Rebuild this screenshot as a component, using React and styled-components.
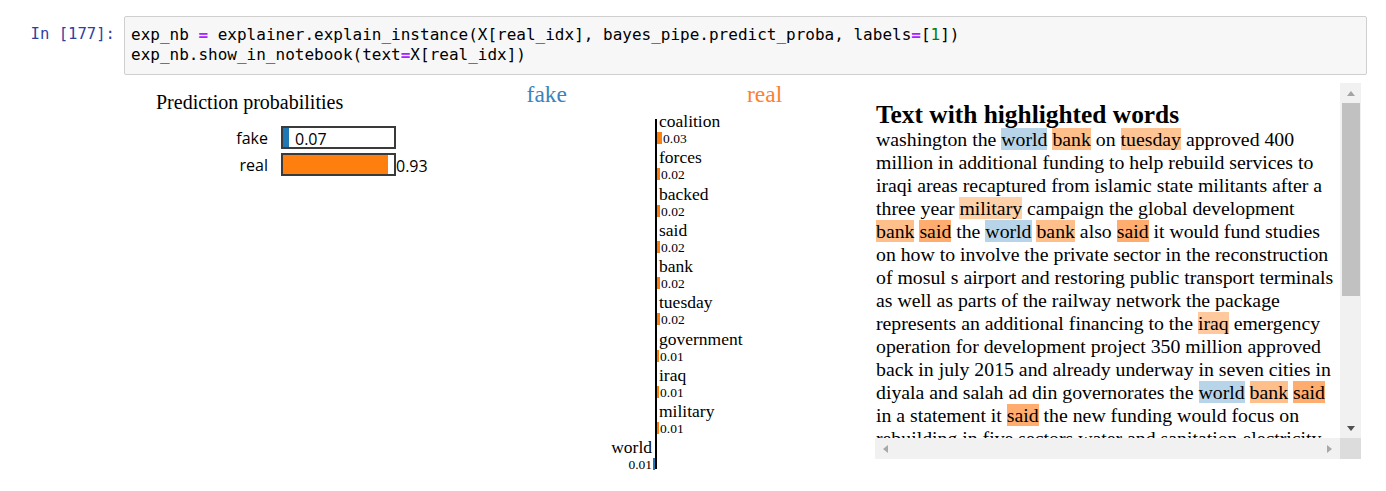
import React from "react";
import styled, { createGlobalStyle } from "styled-components";

const ORANGE = "#ff7f0e";
const BLUE = "#1f77b4";

const probs = [
  { label: "fake", value: 0.07, color: BLUE, inside: true },
  { label: "real", value: 0.93, color: ORANGE, inside: false },
];

const features = [
  { name: "coalition", value: 0.03 },
  { name: "forces", value: 0.02 },
  { name: "backed", value: 0.02 },
  { name: "said", value: 0.02 },
  { name: "bank", value: 0.02 },
  { name: "tuesday", value: 0.02 },
  { name: "government", value: 0.01 },
  { name: "iraq", value: 0.01 },
  { name: "military", value: 0.01 },
  { name: "world", value: -0.01 },
];

// highlight tones, keyed by word
const tones = {
  world: "#b8d4e8",
  bank: "#ffbf8b",
  tuesday: "#ffc493",
  military: "#ffd1a8",
  said: "#ffad6e",
  iraq: "#ffc89d",
};

const lines = [
  "washington the *world *bank on *tuesday approved 400",
  "million in additional funding to help rebuild services to",
  "iraqi areas recaptured from islamic state militants after a",
  "three year *military campaign the global development",
  "*bank *said the *world *bank also *said it would fund studies",
  "on how to involve the private sector in the reconstruction",
  "of mosul s airport and restoring public transport terminals",
  "as well as parts of the railway network the package",
  "represents an additional financing to the *iraq emergency",
  "operation for development project 350 million approved",
  "back in july 2015 and already underway in seven cities in",
  "diyala and salah ad din governorates the *world *bank *said",
  "in a statement it *said the new funding would focus on",
  "rebuilding in five sectors water and sanitation electricity",
];

export default function App() {
  return (
    <Page>
      <GlobalStyle />
      <CodeRow>
        <Prompt>In [177]:</Prompt>
        <CodeBox>
          <div>
            exp_nb <Op>=</Op> explainer.explain_instance(X[real_idx], bayes_pipe.predict_proba, labels<Op>=</Op>[<Num>1</Num>])
          </div>
          <div>
            exp_nb.show_in_notebook(text<Op>=</Op>X[real_idx])
          </div>
        </CodeBox>
      </CodeRow>

      <OutputRow>
        <ProbPanel>
          <ProbTitle>Prediction probabilities</ProbTitle>
          <ProbList>
            {probs.map((p) => (
              <ProbRow key={p.label}>
                <ProbLabel>{p.label}</ProbLabel>
                <ProbBar>
                  <ProbFill $color={p.color} style={{ width: Math.round(p.value * 115) - 2 }} />
                  {p.inside && <ProbValue $inside>{p.value.toFixed(2)}</ProbValue>}
                </ProbBar>
                {!p.inside && <ProbValue>{p.value.toFixed(2)}</ProbValue>}
              </ProbRow>
            ))}
          </ProbList>
        </ProbPanel>

        <FeaturePanel>
          <ClassHeader>
            <ClassName $color="#3b83c0" $side="left">fake</ClassName>
            <span />
            <ClassName $color="#fd8034" $side="right">real</ClassName>
          </ClassHeader>
          <Chart>
            <Axis />
            {features.map((f, i) => {
              const neg = f.value < 0;
              const cell = (
                <FeatureCell $neg={neg}>
                  <FeatureName $neg={neg}>{f.name}</FeatureName>
                  <FeatureValueRow $neg={neg}>
                    {neg && <FeatureValue>{Math.abs(f.value).toFixed(2)}</FeatureValue>}
                    <FeatureBar
                      $color={neg ? BLUE : ORANGE}
                      style={{ width: Math.max(2, Math.round(Math.abs(f.value) * 170)) }}
                    />
                    {!neg && <FeatureValue>{f.value.toFixed(2)}</FeatureValue>}
                  </FeatureValueRow>
                </FeatureCell>
              );
              return (
                <React.Fragment key={f.name}>
                  <LeftCell style={{ gridRow: i + 1 }}>{neg ? cell : null}</LeftCell>
                  <RightCell style={{ gridRow: i + 1 }}>{neg ? null : cell}</RightCell>
                </React.Fragment>
              );
            })}
          </Chart>
        </FeaturePanel>

        <TextPanel>
          <TextScroll>
            <TextHeading>Text with highlighted words</TextHeading>
            {lines.map((line, i) => (
              <TextLine key={i}>
                {line.split(" ").map((w, j) => {
                  const sep = j > 0 ? " " : "";
                  if (w.startsWith("*")) {
                    const word = w.slice(1);
                    return (
                      <React.Fragment key={j}>
                        {sep}
                        <Mark $bg={tones[word]}>{word}</Mark>
                      </React.Fragment>
                    );
                  }
                  return sep + w;
                })}
              </TextLine>
            ))}
          </TextScroll>
          <VScroll>
            <ArrowBox>
              <Arrow $dir="up" />
            </ArrowBox>
            <VThumb />
            <ScrollSpacer />
            <ArrowBox>
              <Arrow $dir="down" />
            </ArrowBox>
          </VScroll>
          <HScroll>
            <ArrowBox $h>
              <Arrow $dir="left" />
            </ArrowBox>
            <ScrollSpacer />
            <ArrowBox $h>
              <Arrow $dir="right" />
            </ArrowBox>
          </HScroll>
          <Corner />
        </TextPanel>
      </OutputRow>
    </Page>
  );
}

// Styles
const GlobalStyle = createGlobalStyle`
  html, body {
    margin: 0;
    padding: 0;
    background: #fff;
  }
  body {
    width: 1386px;
    height: 491px;
    overflow: hidden;
  }
`;

const mono = `"DejaVu Sans Mono", "Liberation Mono", monospace`;
const serif = `"Liberation Serif", "Times New Roman", serif`;
const sans = `"Open Sans", "DejaVu Sans", sans-serif`;

const Page = styled.div`
  padding-top: 16px;
`;

const CodeRow = styled.div`
  display: flex;
  align-items: flex-start;
`;

const Prompt = styled.div`
  width: 115px;
  margin-right: 9px;
  padding-top: 9px;
  text-align: right;
  font-family: ${mono};
  font-size: 15.6px;
  line-height: 19.5px;
  color: #303f9f;
  white-space: nowrap;
`;

const CodeBox = styled.div`
  box-sizing: border-box;
  width: 1243px;
  border: 1px solid #cfcfcf;
  border-radius: 2px;
  background: #f7f7f7;
  padding: 8px 6px 10px;
  font-family: ${mono};
  font-size: 16px;
  line-height: 19.5px;
  color: #000;
  white-space: pre;
`;

const Op = styled.span`
  color: #aa22ff;
  font-weight: bold;
`;

const Num = styled.span`
  color: #008000;
`;

const OutputRow = styled.div`
  display: flex;
  align-items: flex-start;
  margin-top: 8px;
  padding-left: 124px;
`;

const ProbPanel = styled.div`
  width: 350px;
  padding-top: 8px;
`;

const ProbTitle = styled.div`
  margin-left: 32px;
  font-family: ${serif};
  font-size: 20px;
  line-height: 22px;
  color: #000;
`;

const ProbList = styled.div`
  display: flex;
  flex-direction: column;
  gap: 4px;
  margin-top: 13px;
`;

const ProbRow = styled.div`
  display: flex;
  align-items: center;
  height: 23px;
`;

const ProbLabel = styled.div`
  width: 144px;
  margin-right: 13px;
  text-align: right;
  font-family: ${sans};
  font-size: 16px;
  color: #000;
`;

const ProbBar = styled.div`
  box-sizing: border-box;
  display: flex;
  align-items: center;
  width: 115px;
  height: 23px;
  border: 2px solid #3a3a3a;
  background: #fff;
`;

const ProbFill = styled.div`
  align-self: stretch;
  background: ${(p) => p.$color};
`;

const ProbValue = styled.div`
  margin-left: ${(p) => (p.$inside ? "6px" : "0")};
  padding-top: 2px;
  font-family: ${sans};
  font-size: 16px;
  line-height: 20px;
  color: #000;
`;

const FeaturePanel = styled.div`
  width: 401px;
`;

const ClassHeader = styled.div`
  display: grid;
  grid-template-columns: 181px 2px 1fr;
  height: 22px;
`;

const ClassName = styled.div`
  font-family: ${serif};
  font-size: 23.5px;
  line-height: 22px;
  color: ${(p) => p.$color};
  text-align: ${(p) => (p.$side === "left" ? "right" : "left")};
  padding-${(p) => (p.$side === "left" ? "right" : "left")}: ${(p) =>
    p.$side === "left" ? "88px" : "90px"};
`;

const Chart = styled.div`
  display: grid;
  grid-template-columns: 181px 2px 1fr;
  grid-auto-rows: 36.25px;
  margin-top: 8px;
`;

const Axis = styled.div`
  grid-column: 2;
  grid-row: 1 / span 10;
  margin: 6px 0 7px;
  background: #000;
`;

const LeftCell = styled.div`
  grid-column: 1;
`;

const RightCell = styled.div`
  grid-column: 3;
`;

const FeatureCell = styled.div`
  display: flex;
  flex-direction: column;
  align-items: ${(p) => (p.$neg ? "flex-end" : "flex-start")};
`;

const FeatureName = styled.div`
  height: 17px;
  padding: ${(p) => (p.$neg ? "0 3px 0 0" : "0 0 0 2px")};
  font-family: ${serif};
  font-size: 17.5px;
  line-height: 17px;
  color: #000;
  white-space: nowrap;
`;

const FeatureValueRow = styled.div`
  display: flex;
  align-items: flex-start;
  gap: 1px;
  height: 19.25px;
`;

const FeatureBar = styled.div`
  height: 12px;
  margin-top: 2px;
  background: ${(p) => p.$color};
`;

const FeatureValue = styled.div`
  margin-top: 2px;
  font-family: ${serif};
  font-size: 13.5px;
  line-height: 14px;
  color: #000;
`;

const TextPanel = styled.div`
  display: grid;
  grid-template-columns: 465px 21px;
  grid-template-rows: 355px 21px;
  width: 486px;
`;

const TextScroll = styled.div`
  overflow: hidden;
  padding: 18px 0 0 1px;
  font-family: ${serif};
  color: #000;
`;

const TextHeading = styled.div`
  font-size: 25.4px;
  font-weight: bold;
  line-height: 27px;
`;

const TextLine = styled.div`
  font-size: 19.8px;
  line-height: 23px;
  white-space: pre;
`;

const Mark = styled.span`
  background: ${(p) => p.$bg};
`;

const VScroll = styled.div`
  display: flex;
  flex-direction: column;
  background: #f1f1f1;
`;

const HScroll = styled.div`
  display: flex;
  background: #f1f1f1;
`;

const Corner = styled.div`
  background: #dcdcdc;
`;

const ScrollSpacer = styled.div`
  flex: 1;
`;

const ArrowBox = styled.div`
  display: flex;
  align-items: center;
  justify-content: center;
  flex: none;
  width: ${(p) => (p.$h ? "21px" : "100%")};
  height: ${(p) => (p.$h ? "100%" : "20px")};
`;

const Arrow = styled.div`
  width: 0;
  height: 0;
  border-style: solid;
  ${(p) =>
    p.$dir === "up"
      ? "border-width: 0 4px 5px 4px; border-color: transparent transparent #a3a3a3 transparent;"
      : p.$dir === "down"
      ? "border-width: 5px 4px 0 4px; border-color: #505050 transparent transparent transparent;"
      : p.$dir === "left"
      ? "border-width: 4px 5px 4px 0; border-color: transparent #a8a8a8 transparent transparent;"
      : "border-width: 4px 0 4px 5px; border-color: transparent transparent transparent #a8a8a8;"}
`;

const VThumb = styled.div`
  height: 193px;
  margin: 0 1px 0 2px;
  background: #c1c1c1;
`;
